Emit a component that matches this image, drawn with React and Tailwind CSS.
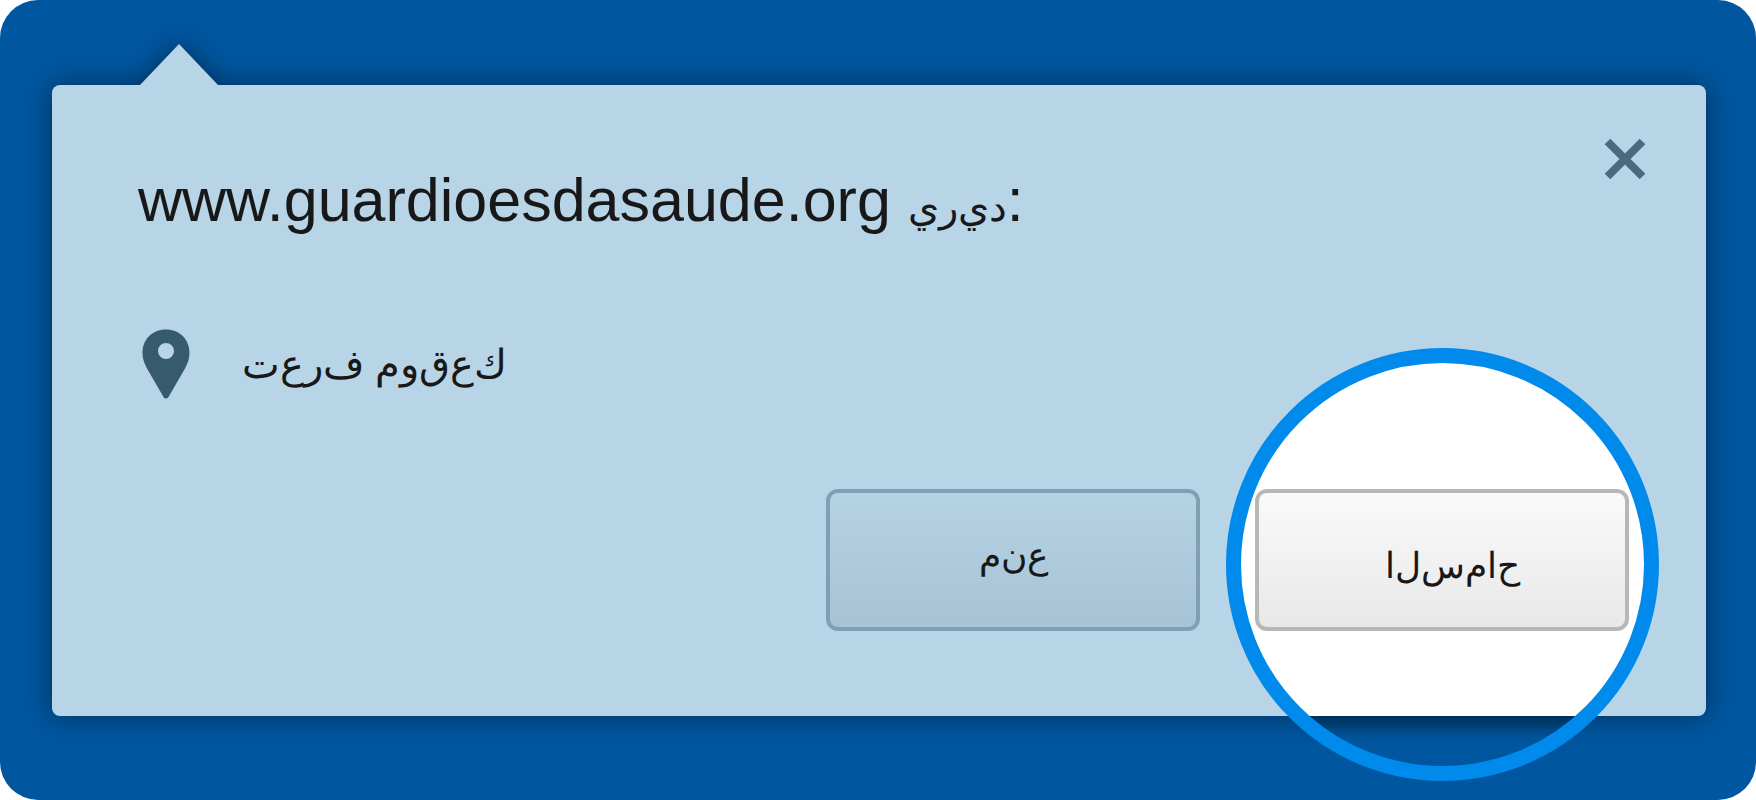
import React from "react";

const arabic =
  "[direction:ltr] [unicode-bidi:bidi-override] [font-feature-settings:'init'_0,'medi'_0,'fina'_0,'liga'_0,'rlig'_0,'calt'_0]";

function Arabic({ children, className = "" }) {
  return (
    <span lang="ar" className={`${arabic} ${className}`}>
      {children}
    </span>
  );
}

export default function App() {
  return (
    <main className="flex min-h-screen flex-col rounded-[38px] bg-[#00569f] pr-[50px] pl-[52px] pt-[44px] pb-[84px] font-['Liberation_Sans',Arial,sans-serif] text-[#181818]">
      <section aria-labelledby="site" className="relative flex flex-1 flex-col">
        <div
          aria-hidden="true"
          className="absolute inset-0 flex flex-col [filter:drop-shadow(0_0_14px_rgba(0,0,0,0.45))]"
        >
          <svg viewBox="0 0 78 41" className="ml-[88px] h-[41px] w-[78px]">
            <path d="M39 0 78 41H0Z" fill="#b8d5e7" />
          </svg>
          <div className="flex-1 rounded-lg bg-[#b8d5e7]" />
        </div>
        <div className="relative flex flex-1 flex-col pt-[41px] pr-[77px] pb-[85px] pl-[86px]">
          <header className="flex items-start justify-between pt-[53px]">
            <h1 id="site" className="pt-[26px] text-[61px] leading-[72px]">
              www.guardioesdasaude.org <Arabic className="text-[40px]">يريد</Arabic>:
            </h1>
            <button type="button" aria-label="Close" className="-mr-[17px] flex">
              <svg viewBox="0 0 42 42" className="size-[42px]" aria-hidden="true">
                <path d="M3.500 3.500 38.500 38.500M38.500 3.500 3.500 38.500" stroke="#4a6b7f" strokeWidth="8" />
              </svg>
            </button>
          </header>
          <div className="mt-[86px] flex items-center gap-[52px] pl-[4px]">
            <svg viewBox="0 0 48 70" className="h-[70px] w-[48px]" aria-hidden="true">
              <path
                fillRule="evenodd"
                fill="#375a6d"
                d="M24 .5C10 .5.5 10.500.5 24c0 6 2 10.500 4.500 15.500l16.500 28.500q2.500 3 5 0L43 39.500c2.500-5 4.500-9.500 4.500-15.500C47.500 10.500 38 .5 24 .5ZM24 14a8 8 0 1 1 0 16a8 8 0 0 1 0-16Z"
              />
            </svg>
            <p className="text-[40px] leading-[60px]">
              <Arabic>تعرف موقعك</Arabic>
            </p>
          </div>
          <div className="mt-auto flex justify-end gap-[55px]">
            <button
              type="button"
              className="h-[142px] w-[374px] rounded-[12px] border-4 border-[#809fb2] bg-linear-to-b from-[#b5d2e3] to-[#a7c3d6] pb-2 text-[36px]"
            >
              <Arabic>منع</Arabic>
            </button>
            <div className="relative">
              <div className="absolute -top-[141px] -left-[29px] size-[433px] rounded-full border-[15px] border-[#008aeb] bg-[linear-gradient(to_bottom,#fff_353px,rgba(0,0,0,0.3)_353px,transparent_375px)] [background-origin:padding-box]" />
              <button
                type="button"
                className="relative h-[142px] w-[374px] rounded-[12px] border-4 border-[#b7b7b7] bg-linear-to-b from-[#fafafa] to-[#e8e8e8] pt-3 pl-5 text-[36px]"
              >
                <Arabic>السماح</Arabic>
              </button>
            </div>
          </div>
        </div>
      </section>
    </main>
  );
}
